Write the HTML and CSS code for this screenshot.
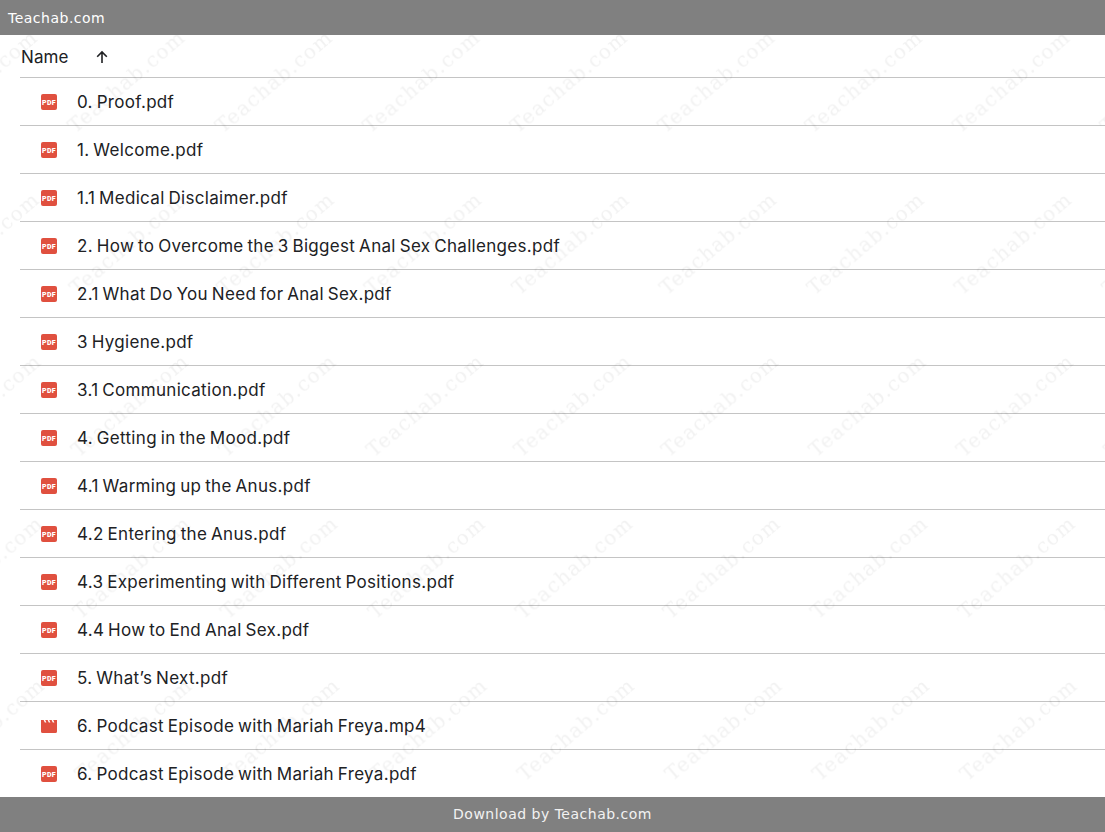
FILE: index.html
```html
<!DOCTYPE html>
<html lang="en">
<head>
<meta charset="utf-8">
<title>Teachab.com</title>
<link rel="stylesheet" href="styles.css">
</head>
<body>
<svg width="0" height="0" class="defs">
  <symbol id="pdf" viewBox="0 0 16 16">
    <rect width="16" height="16" rx="2" fill="#e0503f"/>
    <text x="8" y="10.6" class="pdf-label" text-anchor="middle">PDF</text>
  </symbol>
  <symbol id="video" viewBox="0 0 16 16">
    <path fill="#e0503f" d="M0 2H2.6L3.8 4.5H5.4L4.2 2H6.6L7.8 4.5H9.4L8.2 2H10.6L11.8 4.5H13.4L12.2 2H16V13.4A1.6 1.6 0 0 1 14.4 15H1.6A1.6 1.6 0 0 1 0 13.4z"/>
  </symbol>
</svg>
<div class="page">
  <header class="topbar">Teachab.com</header>
  <main class="files">
    <div class="head"><span class="head-name">Name</span>
      <svg class="arrow" viewBox="0 0 14 14" width="14" height="14"><path d="M7 13V2.2M2.2 6.8 7 2l4.8 4.8" fill="none" stroke="#202124" stroke-width="1.6"/></svg>
    </div>
    <div class="row"><svg class="ico"><use href="#pdf"/></svg><span>0. Proof.pdf</span></div>
    <div class="row"><svg class="ico"><use href="#pdf"/></svg><span>1. Welcome.pdf</span></div>
    <div class="row"><svg class="ico"><use href="#pdf"/></svg><span>1.1 Medical Disclaimer.pdf</span></div>
    <div class="row"><svg class="ico"><use href="#pdf"/></svg><span>2. How to Overcome the 3 Biggest Anal Sex Challenges.pdf</span></div>
    <div class="row"><svg class="ico"><use href="#pdf"/></svg><span>2.1 What Do You Need for Anal Sex.pdf</span></div>
    <div class="row"><svg class="ico"><use href="#pdf"/></svg><span>3 Hygiene.pdf</span></div>
    <div class="row"><svg class="ico"><use href="#pdf"/></svg><span>3.1 Communication.pdf</span></div>
    <div class="row"><svg class="ico"><use href="#pdf"/></svg><span>4. Getting in the Mood.pdf</span></div>
    <div class="row"><svg class="ico"><use href="#pdf"/></svg><span>4.1 Warming up the Anus.pdf</span></div>
    <div class="row"><svg class="ico"><use href="#pdf"/></svg><span>4.2 Entering the Anus.pdf</span></div>
    <div class="row"><svg class="ico"><use href="#pdf"/></svg><span>4.3 Experimenting with Different Positions.pdf</span></div>
    <div class="row"><svg class="ico"><use href="#pdf"/></svg><span>4.4 How to End Anal Sex.pdf</span></div>
    <div class="row"><svg class="ico"><use href="#pdf"/></svg><span>5. What’s Next.pdf</span></div>
    <div class="row"><svg class="ico"><use href="#video"/></svg><span>6. Podcast Episode with Mariah Freya.mp4</span></div>
    <div class="row"><svg class="ico"><use href="#pdf"/></svg><span>6. Podcast Episode with Mariah Freya.pdf</span></div>
  </main>
  <footer class="bottombar">Download by Teachab.com</footer>
  <svg class="watermark" width="1105" height="762">
    <defs>
      <pattern id="wm" patternUnits="userSpaceOnUse" width="147.5" height="162" patternTransform="matrix(1 0 0.011 1 0 0)">
        <text class="wm-text" transform="translate(74 99) rotate(-40)">Teachab.com</text>
        <text class="wm-text" transform="translate(74 261) rotate(-40)">Teachab.com</text>
        <text class="wm-text" transform="translate(-73.5 99) rotate(-40)">Teachab.com</text>
        <text class="wm-text" transform="translate(-73.5 261) rotate(-40)">Teachab.com</text>
      </pattern>
    </defs>
    <rect width="1105" height="762" fill="url(#wm)"/>
  </svg>
</div>
</body>
</html>
```
FILE: styles.css
```css
html, body { margin: 0; padding: 0; background: #fff; }
body { width: 1105px; height: 832px; overflow: hidden; }
.defs { position: absolute; }
.page { position: relative; display: flex; flex-direction: column; width: 1105px; height: 832px; overflow: hidden; }
.topbar { height: 35px; box-sizing: border-box; flex: none; background: #808080; color: #fff; padding-left: 8px; font: 14px/36px "DejaVu Sans", sans-serif; letter-spacing: .5px; }
.files { flex: 1; min-height: 0; padding-left: 20px; font-family: Inter, sans-serif; color: #202124; overflow: hidden; }
.head { display: flex; align-items: center; border-bottom: 1px solid #c4c4c4; font-size: 17px; padding: 2px 0 0 1px; height: 40px; letter-spacing: .11px; }
.head-name { width: 74px; }
.arrow { flex: none; }
.row { display: flex; align-items: center; height: 47px; border-bottom: 1px solid #c4c4c4; font-size: 17px; letter-spacing: .31px; word-spacing: -1.2px; }
.row:last-child { border-bottom: 0; }
.ico { width: 16px; height: 16px; margin: 0 20px 0 21px; flex: none; }
.pdf-label { font: 900 7px Roboto, sans-serif; fill: #fff; }
.bottombar { height: 35px; flex: none; background: #808080; color: #f2f2f2; text-align: center; font: 14px/35px "DejaVu Sans", sans-serif; letter-spacing: .5px; }
.watermark { position: absolute; left: 0; top: 35px; pointer-events: none; }
.wm-text { font: 20px "DejaVu Serif", serif; fill: #000; fill-opacity: .05; letter-spacing: 1.3px; }
```
